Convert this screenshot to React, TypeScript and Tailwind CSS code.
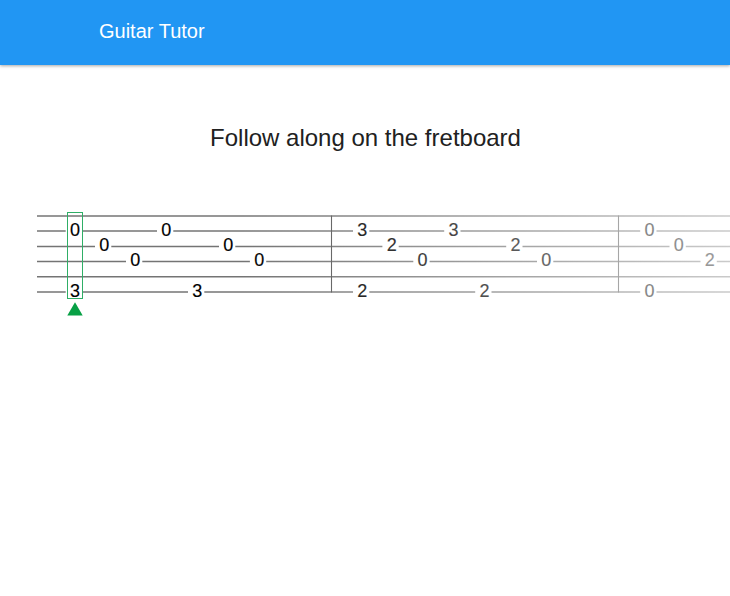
type Note = { x: number; string: number; fret: number };

const stringY = [215.9, 231.1, 246.4, 261.6, 276.8, 292.1];
const bars = [331.5, 618.5];

const notes: Note[] = [
  { x: 75, string: 1, fret: 0 },
  { x: 75, string: 5, fret: 3 },
  { x: 104.3, string: 2, fret: 0 },
  { x: 135.3, string: 3, fret: 0 },
  { x: 166.3, string: 1, fret: 0 },
  { x: 197.3, string: 5, fret: 3 },
  { x: 228.3, string: 2, fret: 0 },
  { x: 259.2, string: 3, fret: 0 },
  { x: 362.3, string: 1, fret: 3 },
  { x: 362.3, string: 5, fret: 2 },
  { x: 391.7, string: 2, fret: 2 },
  { x: 422.6, string: 3, fret: 0 },
  { x: 453.5, string: 1, fret: 3 },
  { x: 484.5, string: 5, fret: 2 },
  { x: 515.5, string: 2, fret: 2 },
  { x: 546.3, string: 3, fret: 0 },
  { x: 649.5, string: 1, fret: 0 },
  { x: 649.5, string: 5, fret: 0 },
  { x: 678.8, string: 2, fret: 0 },
  { x: 709.8, string: 3, fret: 2 },
];

function Tablature() {
  return (
    <svg
      className="block h-[120px] w-full"
      viewBox="0 204 730 120"
      width="730"
      height="120"
      role="img"
      aria-label="Guitar tablature"
    >
      <defs>
        <linearGradient id="fade" gradientUnits="userSpaceOnUse" x1="240" y1="0" x2="730" y2="0">
          <stop offset="0" stopColor="#fff" stopOpacity="0" />
          <stop offset="1" stopColor="#fff" stopOpacity="0.62" />
        </linearGradient>
      </defs>
      {stringY.map((y) => (
        <line key={y} x1="37" x2="730" y1={y} y2={y} stroke="#747474" strokeWidth="1.5" />
      ))}
      {bars.map((x) => (
        <line key={x} x1={x} x2={x} y1="215.5" y2="292.5" stroke="#555" strokeWidth="1.1" />
      ))}
      {notes.map((n) => (
        <g key={`${n.x}-${n.string}`}>
          <rect x={n.x - 9.3} y={stringY[n.string] - 3} width="16.3" height="6" fill="#fff" />
          <text
            x={n.x}
            y={stringY[n.string] + 4.7}
            textAnchor="middle"
            className="fill-black font-['Liberation_Sans',Arial,sans-serif] text-[18px]"
            stroke="#000"
            strokeWidth="0.15"
          >
            {n.fret}
          </text>
        </g>
      ))}
      <rect x="240" y="204" width="490" height="120" fill="url(#fade)" />
      <rect x="67.5" y="212.5" width="15" height="86" fill="none" stroke="#2fae66" />
      <path d="M75 302.3 82.7 315.5H67.3Z" fill="#07a045" />
    </svg>
  );
}

export default function App() {
  return (
    <div className="min-h-[596px] w-full overflow-hidden bg-white font-['Liberation_Sans',Arial,sans-serif]">
      <header className="flex h-[65px] items-start bg-[#2196f3] pt-[16px] pl-[99px] shadow-[0_1px_3px_rgba(0,0,0,0.35)]">
        <div className="text-[20px] leading-[30px] text-white">Guitar Tutor</div>
      </header>
      <main>
        <h1 className="pt-[55px] pl-px text-center text-[24px] leading-[36px] text-[#212121]">
          Follow along on the fretboard
        </h1>
        <div className="pt-[48px]">
          <Tablature />
        </div>
      </main>
    </div>
  );
}
